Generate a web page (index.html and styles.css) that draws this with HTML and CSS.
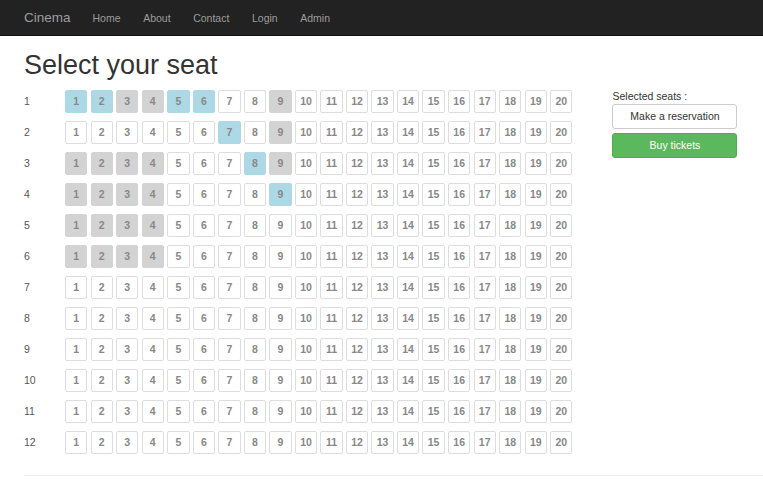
FILE: index.html
```html
<!DOCTYPE html>
<html lang="en">
<head>
<meta charset="utf-8">
<title>Cinema - Select your seat</title>
<link rel="stylesheet" href="styles.css">
</head>
<body>
<nav class="navbar">
  <a class="brand" href="#">Cinema</a>
  <ul class="nav">
    <li><a href="#">Home</a></li>
    <li><a href="#">About</a></li>
    <li><a href="#">Contact</a></li>
    <li><a href="#">Login</a></li>
    <li><a href="#">Admin</a></li>
  </ul>
</nav>
<main class="container">
  <h1 class="title">Select your seat</h1>
  <div class="layout">
    <div class="seatmap">
      <div class="row"><span class="row-label">1</span><div class="seats">
        <span class="seat blue">1</span><span class="seat blue">2</span><span class="seat taken">3</span><span class="seat taken">4</span><span class="seat blue">5</span><span class="seat blue">6</span><span class="seat">7</span><span class="seat">8</span><span class="seat taken">9</span><span class="seat">10</span><span class="seat">11</span><span class="seat">12</span><span class="seat">13</span><span class="seat">14</span><span class="seat">15</span><span class="seat">16</span><span class="seat">17</span><span class="seat">18</span><span class="seat">19</span><span class="seat">20</span>
      </div></div>
      <div class="row"><span class="row-label">2</span><div class="seats">
        <span class="seat">1</span><span class="seat">2</span><span class="seat">3</span><span class="seat">4</span><span class="seat">5</span><span class="seat">6</span><span class="seat blue">7</span><span class="seat">8</span><span class="seat taken">9</span><span class="seat">10</span><span class="seat">11</span><span class="seat">12</span><span class="seat">13</span><span class="seat">14</span><span class="seat">15</span><span class="seat">16</span><span class="seat">17</span><span class="seat">18</span><span class="seat">19</span><span class="seat">20</span>
      </div></div>
      <div class="row"><span class="row-label">3</span><div class="seats">
        <span class="seat taken">1</span><span class="seat taken">2</span><span class="seat taken">3</span><span class="seat taken">4</span><span class="seat">5</span><span class="seat">6</span><span class="seat">7</span><span class="seat blue">8</span><span class="seat taken">9</span><span class="seat">10</span><span class="seat">11</span><span class="seat">12</span><span class="seat">13</span><span class="seat">14</span><span class="seat">15</span><span class="seat">16</span><span class="seat">17</span><span class="seat">18</span><span class="seat">19</span><span class="seat">20</span>
      </div></div>
      <div class="row"><span class="row-label">4</span><div class="seats">
        <span class="seat taken">1</span><span class="seat taken">2</span><span class="seat taken">3</span><span class="seat taken">4</span><span class="seat">5</span><span class="seat">6</span><span class="seat">7</span><span class="seat">8</span><span class="seat blue">9</span><span class="seat">10</span><span class="seat">11</span><span class="seat">12</span><span class="seat">13</span><span class="seat">14</span><span class="seat">15</span><span class="seat">16</span><span class="seat">17</span><span class="seat">18</span><span class="seat">19</span><span class="seat">20</span>
      </div></div>
      <div class="row"><span class="row-label">5</span><div class="seats">
        <span class="seat taken">1</span><span class="seat taken">2</span><span class="seat taken">3</span><span class="seat taken">4</span><span class="seat">5</span><span class="seat">6</span><span class="seat">7</span><span class="seat">8</span><span class="seat">9</span><span class="seat">10</span><span class="seat">11</span><span class="seat">12</span><span class="seat">13</span><span class="seat">14</span><span class="seat">15</span><span class="seat">16</span><span class="seat">17</span><span class="seat">18</span><span class="seat">19</span><span class="seat">20</span>
      </div></div>
      <div class="row"><span class="row-label">6</span><div class="seats">
        <span class="seat taken">1</span><span class="seat taken">2</span><span class="seat taken">3</span><span class="seat taken">4</span><span class="seat">5</span><span class="seat">6</span><span class="seat">7</span><span class="seat">8</span><span class="seat">9</span><span class="seat">10</span><span class="seat">11</span><span class="seat">12</span><span class="seat">13</span><span class="seat">14</span><span class="seat">15</span><span class="seat">16</span><span class="seat">17</span><span class="seat">18</span><span class="seat">19</span><span class="seat">20</span>
      </div></div>
      <div class="row"><span class="row-label">7</span><div class="seats">
        <span class="seat">1</span><span class="seat">2</span><span class="seat">3</span><span class="seat">4</span><span class="seat">5</span><span class="seat">6</span><span class="seat">7</span><span class="seat">8</span><span class="seat">9</span><span class="seat">10</span><span class="seat">11</span><span class="seat">12</span><span class="seat">13</span><span class="seat">14</span><span class="seat">15</span><span class="seat">16</span><span class="seat">17</span><span class="seat">18</span><span class="seat">19</span><span class="seat">20</span>
      </div></div>
      <div class="row"><span class="row-label">8</span><div class="seats">
        <span class="seat">1</span><span class="seat">2</span><span class="seat">3</span><span class="seat">4</span><span class="seat">5</span><span class="seat">6</span><span class="seat">7</span><span class="seat">8</span><span class="seat">9</span><span class="seat">10</span><span class="seat">11</span><span class="seat">12</span><span class="seat">13</span><span class="seat">14</span><span class="seat">15</span><span class="seat">16</span><span class="seat">17</span><span class="seat">18</span><span class="seat">19</span><span class="seat">20</span>
      </div></div>
      <div class="row"><span class="row-label">9</span><div class="seats">
        <span class="seat">1</span><span class="seat">2</span><span class="seat">3</span><span class="seat">4</span><span class="seat">5</span><span class="seat">6</span><span class="seat">7</span><span class="seat">8</span><span class="seat">9</span><span class="seat">10</span><span class="seat">11</span><span class="seat">12</span><span class="seat">13</span><span class="seat">14</span><span class="seat">15</span><span class="seat">16</span><span class="seat">17</span><span class="seat">18</span><span class="seat">19</span><span class="seat">20</span>
      </div></div>
      <div class="row"><span class="row-label">10</span><div class="seats">
        <span class="seat">1</span><span class="seat">2</span><span class="seat">3</span><span class="seat">4</span><span class="seat">5</span><span class="seat">6</span><span class="seat">7</span><span class="seat">8</span><span class="seat">9</span><span class="seat">10</span><span class="seat">11</span><span class="seat">12</span><span class="seat">13</span><span class="seat">14</span><span class="seat">15</span><span class="seat">16</span><span class="seat">17</span><span class="seat">18</span><span class="seat">19</span><span class="seat">20</span>
      </div></div>
      <div class="row"><span class="row-label">11</span><div class="seats">
        <span class="seat">1</span><span class="seat">2</span><span class="seat">3</span><span class="seat">4</span><span class="seat">5</span><span class="seat">6</span><span class="seat">7</span><span class="seat">8</span><span class="seat">9</span><span class="seat">10</span><span class="seat">11</span><span class="seat">12</span><span class="seat">13</span><span class="seat">14</span><span class="seat">15</span><span class="seat">16</span><span class="seat">17</span><span class="seat">18</span><span class="seat">19</span><span class="seat">20</span>
      </div></div>
      <div class="row"><span class="row-label">12</span><div class="seats">
        <span class="seat">1</span><span class="seat">2</span><span class="seat">3</span><span class="seat">4</span><span class="seat">5</span><span class="seat">6</span><span class="seat">7</span><span class="seat">8</span><span class="seat">9</span><span class="seat">10</span><span class="seat">11</span><span class="seat">12</span><span class="seat">13</span><span class="seat">14</span><span class="seat">15</span><span class="seat">16</span><span class="seat">17</span><span class="seat">18</span><span class="seat">19</span><span class="seat">20</span>
      </div></div>
    </div>
    <aside class="panel">
      <div class="panel-label">Selected seats :</div>
      <button class="btn btn-default" type="button">Make a reservation</button>
      <button class="btn btn-success" type="button">Buy tickets</button>
    </aside>
  </div>
  <hr class="divider">
</main>
</body>
</html>
```

FILE: styles.css
```css
* {
  box-sizing: border-box;
}

body {
  margin: 0;
  font-family: "Liberation Sans", Arial, sans-serif;
  color: #333;
  background: #fff;
  overflow: hidden;
}

.navbar {
  background: #222;
  height: 36px;
  display: flex;
  align-items: baseline;
  padding: 9px 0 0 24px;
  border-bottom: 1px solid #111;
}

.brand {
  color: #9d9d9d;
  font-size: 13.5px;
  line-height: 1;
  text-decoration: none;
  margin-right: 22px;
}

.nav {
  display: flex;
  gap: 22.6px;
  list-style: none;
  margin: 0;
  padding: 0;
  line-height: 1;
}

.nav a {
  color: #9d9d9d;
  font-size: 10.5px;
  text-decoration: none;
}

.container {
  padding-left: 24px;
}

.title {
  font-size: 27px;
  font-weight: normal;
  line-height: 1.1;
  color: #333;
  margin: 15px 0 9px;
}

.layout {
  display: flex;
  align-items: flex-start;
  gap: 40px;
}

.seatmap {
  display: flex;
  flex-direction: column;
  gap: 8px;
}

.row {
  display: flex;
  align-items: center;
}

.row-label {
  width: 41px;
  font-size: 10.5px;
  color: #555;
}

.seats {
  display: flex;
  gap: 3.15px;
}

.seat {
  width: 22.4px;
  height: 23px;
  border: 1px solid #ddd;
  border-radius: 2px;
  background: #fff;
  display: flex;
  align-items: center;
  justify-content: center;
  font-size: 10.5px;
  font-weight: bold;
  color: #888;
}

.seat.blue {
  background: #add8e6;
  border-color: #add8e6;
}

.seat.taken {
  background: #d3d3d3;
  border-color: #d3d3d3;
}

.panel {
  width: 125px;
  display: flex;
  flex-direction: column;
}

.panel-label {
  font-size: 10.5px;
  color: #333;
  line-height: 13px;
  margin-bottom: 1px;
}

.btn {
  height: 25px;
  border-radius: 3px;
  font-family: "Liberation Sans", Arial, sans-serif;
  font-size: 10.5px;
  padding: 0;
  border: 1px solid #ccc;
}

.btn-default {
  background: #fff;
  color: #333;
  margin-bottom: 4px;
}

.btn-success {
  background: #5cb85c;
  border-color: #4cae4c;
  color: #fff;
}

.divider {
  border: 0;
  border-top: 1px solid #eee;
  margin: 21px 0 0;
}
```
